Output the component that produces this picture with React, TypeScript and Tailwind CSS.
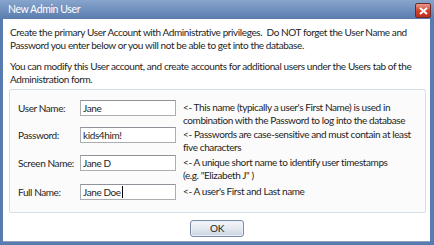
import React from "react";

const font = { fontFamily: 'Lato, "Noto Sans", sans-serif' };

function Row({ label, value, desc, caret }: { label: string; value: string; desc: React.ReactNode; caret?: boolean }) {
  return (
    <div className="flex items-start whitespace-nowrap">
      <div className="w-[63px] h-[16px] leading-[16px] pl-[1px]">{label}</div>
      <div className="w-[96px] h-[16px] border border-[#abadb3] border-t-[#8f9399] bg-white leading-[14px] pl-[2px] flex items-center">
        <span>{value}</span>
        {caret && <span className="inline-block w-[1px] h-[12px] bg-black ml-[1px]" />}
      </div>
      <div className="ml-[7px] leading-[12.5px] pt-[1px]">{desc}</div>
    </div>
  );
}

export default function App() {
  return (
    <div className="w-[434px] h-[245px] flex flex-col bg-[#587bb0] text-[10px] tracking-[-0.4px] text-[#1e1e1e]" style={font}>
      <div className="h-[19px] flex items-center justify-between bg-gradient-to-b from-[#88a5cd] to-[#5a7cae] pl-[8px] pr-[3px] pt-[1px]">
        <span className="text-white text-[10.5px]">New Admin User</span>
        <div className="w-[16px] h-[15px] mt-[1px] rounded-[2px] border border-[#6b2a2a] bg-gradient-to-b from-[#e8998d] via-[#d2432e] to-[#c22f1a] flex items-center justify-center">
          <svg width="9" height="8" viewBox="0 0 9 8">
            <path d="M1 1 L8 7 M8 1 L1 7" stroke="white" strokeWidth="2" />
          </svg>
        </div>
      </div>
      <div className="flex-1 ml-[3px] mr-[4px] mb-[3px] bg-white flex flex-col border-b border-[#8da1bf] pt-[7px]">
        <p className="pl-[7px] leading-[13px] whitespace-nowrap">
          Create the primary User Account with Administrative privileges.&nbsp; Do NOT forget the User Name and
          <br />
          Password you enter below or you will not be able to get into the database.
        </p>
        <p className="pl-[7px] leading-[13px] mt-[8px] whitespace-nowrap">
          You can modify this User account, and create accounts for additional users under the Users tab of the
          <br />
          Administration form.
        </p>
        <div className="mt-[3px] ml-[6px] mr-[4px] h-[124px] border border-[#d5dfe5] bg-[#fbfbfb] rounded-[2px] pl-[7px] pt-[10px] grid grid-rows-[27px_28px_29px_16px]">
          <Row label="User Name:" value="Jane" desc={<>&lt;- This name (typically a user's First Name) is used in<br />combination with the Password to log into the database</>} />
          <Row label="Password:" value="kids4him!" desc={<>&lt;- Passwords are case-sensitive and must contain at least<br />five characters</>} />
          <Row label="Screen Name:" value="Jane D" desc={<>&lt;- A unique short name to identify user timestamps<br />(e.g. "Elizabeth J" )</>} />
          <Row label="Full Name:" value="Jane Doe" caret desc={<>&lt;- A user's First and Last name</>} />
        </div>
        <div className="flex justify-center mt-[7px] pl-[1px]">
          <div className="w-[54px] h-[17px] rounded-[3px] border border-[#7a8ba3] bg-gradient-to-b from-[#f4f6f9] via-[#e4e9f0] to-[#c9d3e0] flex items-center justify-center shadow-[inset_0_0_0_1px_#e8f1fb]">
            OK
          </div>
        </div>
      </div>
    </div>
  );
}
